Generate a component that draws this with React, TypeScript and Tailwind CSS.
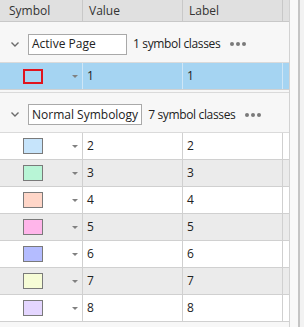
import React from 'react';

type Row = { value: string; color: string; stripe: boolean };

const rows: Row[] = [
  { value: '2', color: '#c6e4fb', stripe: false },
  { value: '3', color: '#b8f5d6', stripe: true },
  { value: '4', color: '#ffd6c8', stripe: false },
  { value: '5', color: '#ffb5ea', stripe: true },
  { value: '6', color: '#b4bcff', stripe: false },
  { value: '7', color: '#f6fcd6', stripe: true },
  { value: '8', color: '#e4d6ff', stripe: false },
];

function Caret() {
  return <div className="w-0 h-0 border-l-[3px] border-r-[3px] border-t-[3px] border-l-transparent border-r-transparent border-t-[#808080]" />;
}

function Chevron() {
  return (
    <svg width="8" height="5" viewBox="0 0 8 5" className="shrink-0">
      <path d="M0.5 0.5 L4 4 L7.5 0.5" fill="none" stroke="#6b6b6b" strokeWidth="1.4" />
    </svg>
  );
}

function Dots() {
  return (
    <div className="flex gap-[2px] items-center">
      <div className="w-[4px] h-[4px] rounded-full bg-[#7a7a7a]" />
      <div className="w-[4px] h-[4px] rounded-full bg-[#7a7a7a]" />
      <div className="w-[4px] h-[4px] rounded-full bg-[#7a7a7a]" />
    </div>
  );
}

function GroupRow({ name, count, h }: { name: string; count: string; h: string }) {
  return (
    <div className={`${h} flex items-center border-b border-[#dadada] pt-[4px]`}>
      <div className="w-[28px] flex justify-center pl-[1px]">
        <Chevron />
      </div>
      <div className="h-[21px] min-w-[99px] border border-[#a9a9a9] bg-white px-[3px] flex items-center text-[#222]">
        {name}
      </div>
      <span className="ml-[6px] text-[#222] tracking-[-0.35px]">{count}</span>
      <div className="ml-[10px]">
        <Dots />
      </div>
    </div>
  );
}

function DataRow({ value, swatch, bg, selected }: { value: string; swatch: React.ReactNode; bg: string; selected?: boolean }) {
  const line = selected ? 'border-[#cfe6f6]' : 'border-[#d0d0d0]';
  return (
    <div className={`h-[27px] flex border-b border-[#d0d0d0] ${bg}`}>
      <div className={`w-[83px] flex items-center border-r ${line}`}>
        <div className="ml-[23px]">{swatch}</div>
        <div className="ml-[29px]">
          <Caret />
        </div>
      </div>
      <div className={`w-[100px] flex items-center pl-[4px] border-r ${line}`}>{value}</div>
      <div className={`w-[100px] flex items-center pl-[4px] border-r ${line}`}>{value}</div>
      <div className="flex-1" />
    </div>
  );
}

export default function App() {
  return (
    <div className="w-[304px] h-[327px] flex overflow-hidden bg-white font-['Open_Sans',sans-serif] text-[12px] text-[#222]">
      <div className="w-[290px] flex flex-col bg-[#f7f7f7] border-r border-[#d2d2d2]">
        <div className="h-[22px] flex shrink-0 bg-[#e0e0e0] border-b border-[#c8c8c8] text-[#333]">
          <div className="w-[83px] pl-[9px] flex items-center border-r border-[#c8c8c8]">Symbol</div>
          <div className="w-[100px] pl-[6px] flex items-center border-r border-[#c8c8c8]">Value</div>
          <div className="w-[100px] pl-[6px] flex items-center border-r border-[#c8c8c8]">Label</div>
          <div className="flex-1" />
        </div>

        <GroupRow name="Active Page" count="1 symbol classes" h="h-[41px]" />
        <DataRow
          value="1"
          bg="bg-[#a5d4f2]"
          selected
          swatch={<div className="w-[20px] h-[15px] border-2 border-[#e0141e]" />}
        />
        <div className="h-[3px] border-b border-[#dadada]" />

        <GroupRow name="Normal Symbology" count="7 symbol classes" h="h-[40px]" />
        {rows.map((r) => (
          <DataRow
            key={r.value}
            value={r.value}
            bg={r.stripe ? 'bg-[#ebebeb]' : 'bg-white'}
            swatch={<div className="w-[20px] h-[16px] border border-[#7a7a7a]" style={{ backgroundColor: r.color }} />}
          />
        ))}
      </div>
      <div className="w-[8px] bg-[#f8f8f8]" />
      <div className="w-[2px] bg-[#c4c4c4]" />
      <div className="flex-1 bg-[#f2f2f2]" />
    </div>
  );
}
